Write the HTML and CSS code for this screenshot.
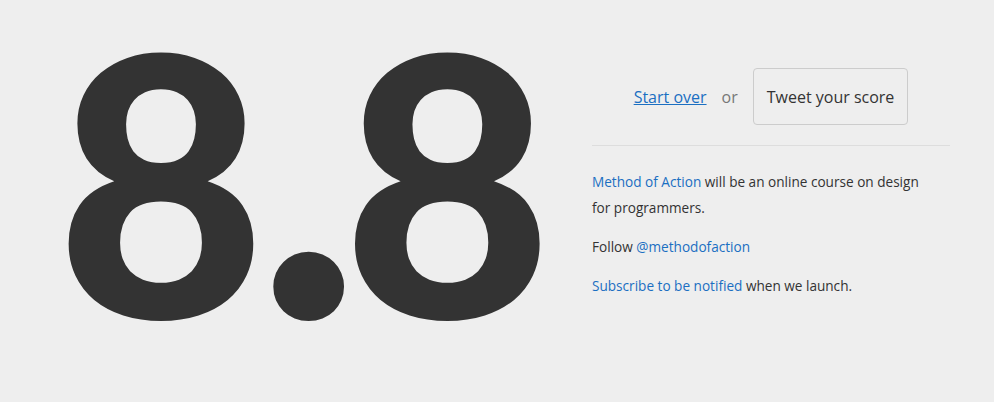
FILE: index.html
```html
<!DOCTYPE html>
<html lang="en">
<head>
    <meta charset="UTF-8">
    <title>Your score</title>
    <link rel="stylesheet" href="styles.css">
</head>
<body>
    <div class="page">
        <div class="score">8<span class="dot">.</span>8</div>

        <div class="sidebar">
            <div class="actions">
                <a href="#" class="start-over">Start over</a>
                <span class="or">or</span>
                <button class="tweet-btn">Tweet your score</button>
            </div>

            <div class="about">
                <p><a href="#">Method of Action</a> will be an online course on design for programmers.</p>
                <p>Follow <a href="#">@methodofaction</a></p>
                <p><a href="#">Subscribe to be notified</a> when we launch.</p>
            </div>
        </div>
    </div>
</body>
</html>
```

FILE: styles.css
```css
* {
    margin: 0;
    padding: 0;
    box-sizing: border-box;
}

body {
    font-family: 'Open Sans', 'Noto Sans', sans-serif;
    background: #eeeeee;
    color: #333;
    height: 100vh;
    overflow: hidden;
}

a {
    color: #1b6fc2;
    text-decoration: none;
}

.page {
    display: flex;
    align-items: flex-start;
    padding: 0 0 0 56px;
}

.score {
    font-family: 'Lato', sans-serif;
    font-weight: 900;
    font-size: 362px;
    line-height: 380px;
    height: 380px;
    letter-spacing: -9px;
    color: #333;
    width: 536px;
    margin-top: -12px;
    white-space: nowrap;
}

.score .dot {
    font-size: 1.2em;
    line-height: 0;
    letter-spacing: -18px;
}

.sidebar {
    width: 358px;
    padding-top: 68px;
}

.actions {
    display: flex;
    justify-content: center;
    align-items: center;
    gap: 15px;
    padding-bottom: 20px;
    border-bottom: 1px solid #dddddd;
}

.start-over {
    font-size: 16px;
    text-decoration: underline;
}

.or {
    color: #777;
    font-size: 16px;
}

.tweet-btn {
    font-family: inherit;
    font-size: 16px;
    color: #333;
    background: #eeeeee;
    border: 1px solid #cccccc;
    border-radius: 4px;
    height: 57px;
    padding: 0 13px;
}

.about {
    padding-top: 23px;
    max-width: 336px;
    font-size: 13.6px;
    line-height: 26px;
}

.about p {
    margin-bottom: 13px;
}
```
